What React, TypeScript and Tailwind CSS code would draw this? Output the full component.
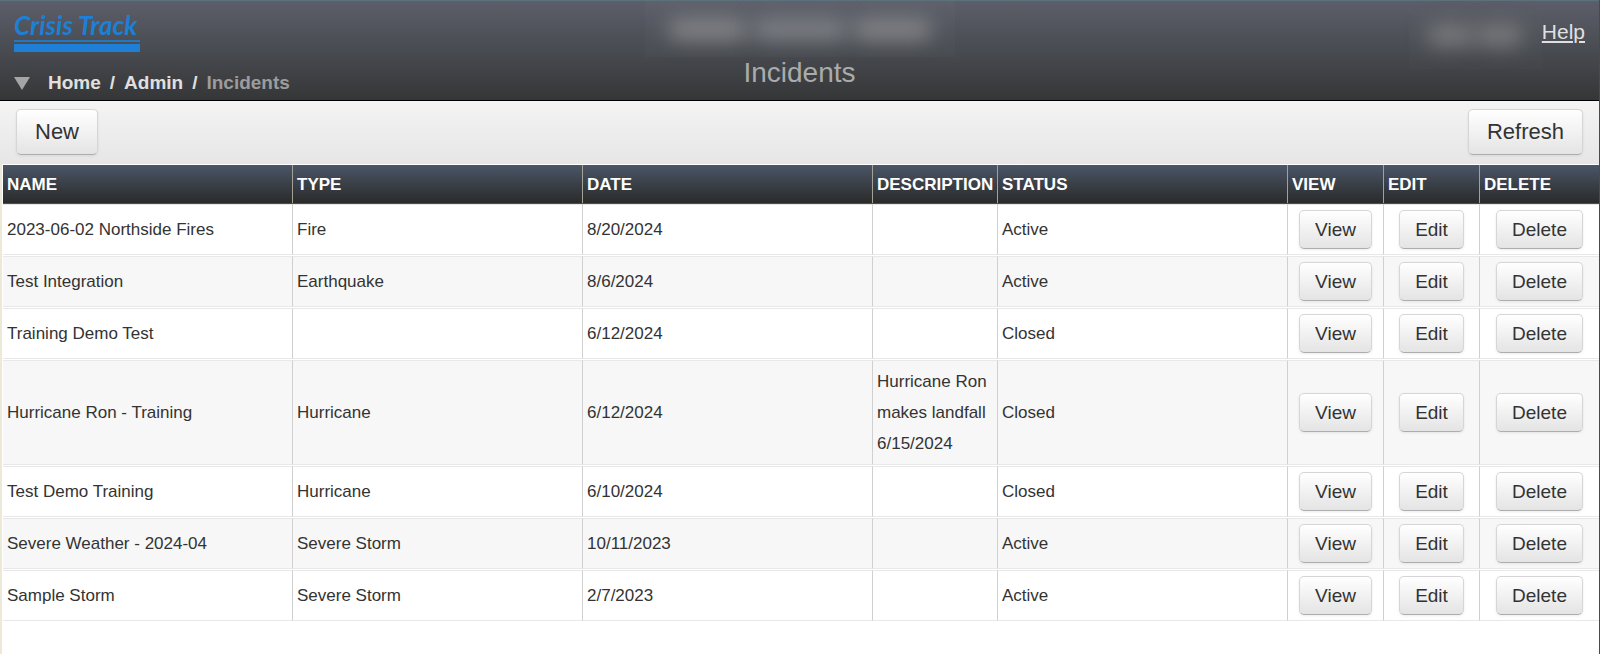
const incidents = [
    { name: '2023-06-02 Northside Fires', type: 'Fire', date: '8/20/2024', description: '', status: 'Active' },
    { name: 'Test Integration', type: 'Earthquake', date: '8/6/2024', description: '', status: 'Active' },
    { name: 'Training Demo Test', type: '', date: '6/12/2024', description: '', status: 'Closed' },
    { name: 'Hurricane Ron - Training', type: 'Hurricane', date: '6/12/2024', description: 'Hurricane Ron makes landfall 6/15/2024', status: 'Closed' },
    { name: 'Test Demo Training', type: 'Hurricane', date: '6/10/2024', description: '', status: 'Closed' },
    { name: 'Severe Weather - 2024-04', type: 'Severe Storm', date: '10/11/2023', description: '', status: 'Active' },
    { name: 'Sample Storm', type: 'Severe Storm', date: '2/7/2023', description: '', status: 'Active' },
]

const columns = [
    { label: 'NAME', width: '' },
    { label: 'TYPE', width: '' },
    { label: 'DATE', width: '' },
    { label: 'DESCRIPTION', width: 'w-[125px]' },
    { label: 'STATUS', width: '' },
    { label: 'VIEW', width: 'w-24' },
    { label: 'EDIT', width: 'w-24' },
    { label: 'DELETE', width: 'w-[119px]' },
]

const buttonLook = 'rounded-[5px] border border-[#d6d6d6] border-b-[#adadad] bg-linear-to-b from-white to-[#e4e4e4] text-[#333] shadow-[0_1px_3px_rgba(0,0,0,0.08)]'

function ToolbarButton({ label }: { label: string }) {
    return (
        <button type="button" className={`${buttonLook} h-[46px] px-[18px] pb-0.5 text-[22px]`}>
            {label}
        </button>
    )
}

function RowButton({ label }: { label: string }) {
    return (
        <button type="button" className={`${buttonLook} block mx-auto h-[39px] px-[15px] text-[19px]`}>
            {label}
        </button>
    )
}

function Logo() {
    return (
        <div className="w-[126px] text-[#1d7fd6]">
            <div className="h-[29px] whitespace-nowrap font-['Lato'] text-[26px] leading-7 font-bold italic">Crisis Track</div>
            <div className="h-0.5 bg-[#1d7fd6]/80" />
            <div className="mt-0.5 h-2 bg-[#1d7fd6]" />
        </div>
    )
}

function Header() {
    return (
        <header className="grid h-[101px] grid-cols-[1fr_auto_1fr] border-t border-t-[#5c717b] border-b border-b-black bg-linear-to-b from-[#5c5f69] via-[#484b51] to-[#353637] px-[14px]">
            <div className="flex flex-col justify-between pt-[10px] pb-[5px]">
                <Logo />
                <nav aria-label="Breadcrumb" className="flex items-center text-[19px] leading-6 font-bold text-[#e0e0e0]">
                    <svg viewBox="0 0 16 13" className="mr-[18px] h-[13px] w-4 fill-[#a5a5a5]" aria-hidden="true">
                        <path d="M0 0H16L8 13Z" />
                    </svg>
                    <a href="#home">Home</a>
                    <span className="mx-[9px]">/</span>
                    <a href="#admin">Admin</a>
                    <span className="mx-[9px]">/</span>
                    <span className="text-[#9c9c9c]">Incidents</span>
                </nav>
            </div>

            <div className="flex flex-col items-center">
                {/* Masked account name */}
                <div className="flex h-14 w-[310px] items-center justify-center gap-1 bg-white/2" aria-hidden="true">
                    <div className="h-5 w-20 rounded-full bg-[#85868a] blur-[10px]" />
                    <div className="h-5 w-24 rounded-full bg-[#808287] blur-[10px]" />
                    <div className="h-5 w-20 rounded-full bg-[#85868a] blur-[10px]" />
                </div>
                <h1 className="text-[28px] leading-8 text-[#ababab]">Incidents</h1>
            </div>

            <div className="flex items-start justify-end pt-2">
                {/* Masked user name */}
                <div className="flex h-[60px] w-[133px] items-start justify-center bg-white/1 pt-4" aria-hidden="true">
                    <div className="h-5 w-12 rounded-full bg-[#7b7c7e] blur-[10px]" />
                    <div className="h-5 w-12 rounded-full bg-[#7b7c7e] blur-[10px]" />
                </div>
                <a href="#help" className="mt-[11px] text-[21px] leading-6 text-[#e0e0e0] underline">Help</a>
            </div>
        </header>
    )
}

export default function App() {
    return (
        <div className="min-h-screen border-r border-r-[#4a4a4a] bg-white font-['Liberation_Sans',Arial,sans-serif] text-[#333]">
            <Header />

            <div className="flex h-[63px] items-start justify-between bg-linear-to-b from-[#f4f4f4] to-[#e6e6e6] px-4 pt-2">
                <ToolbarButton label="New" />
                <ToolbarButton label="Refresh" />
            </div>

            <main className="min-h-[calc(100vh-164px)] border-l-2 border-l-[#ece9d8] pl-px">
                <table className="w-full table-fixed border-separate border-spacing-x-0 border-spacing-y-px text-[17px] leading-[31px]">
                    <thead>
                        <tr className="bg-linear-to-b from-[#4b5667] to-[#2a2b2a] text-left text-white">
                            {columns.map((column) => (
                                <th
                                    key={column.label}
                                    scope="col"
                                    className={`${column.width} h-[38px] border-r border-r-[#a3a196] pl-1 font-bold shadow-[0_1px_0_#4a4c4d] last:border-r-0`}
                                >
                                    {column.label}
                                </th>
                            ))}
                        </tr>
                    </thead>
                    <tbody className="[&_td]:border-y [&_td]:border-y-[#e8e8e8] [&_td]:border-r [&_td]:border-r-[#d0d0d0] [&_td]:px-1 [&_td]:py-[5px] [&_td:last-child]:border-r-0">
                        {incidents.map((incident) => (
                            <tr key={incident.name} className="even:bg-[#f7f7f7]">
                                <td>{incident.name}</td>
                                <td>{incident.type}</td>
                                <td>{incident.date}</td>
                                <td>{incident.description}</td>
                                <td>{incident.status}</td>
                                <td><RowButton label="View" /></td>
                                <td><RowButton label="Edit" /></td>
                                <td><RowButton label="Delete" /></td>
                            </tr>
                        ))}
                    </tbody>
                </table>
            </main>
        </div>
    )
}
